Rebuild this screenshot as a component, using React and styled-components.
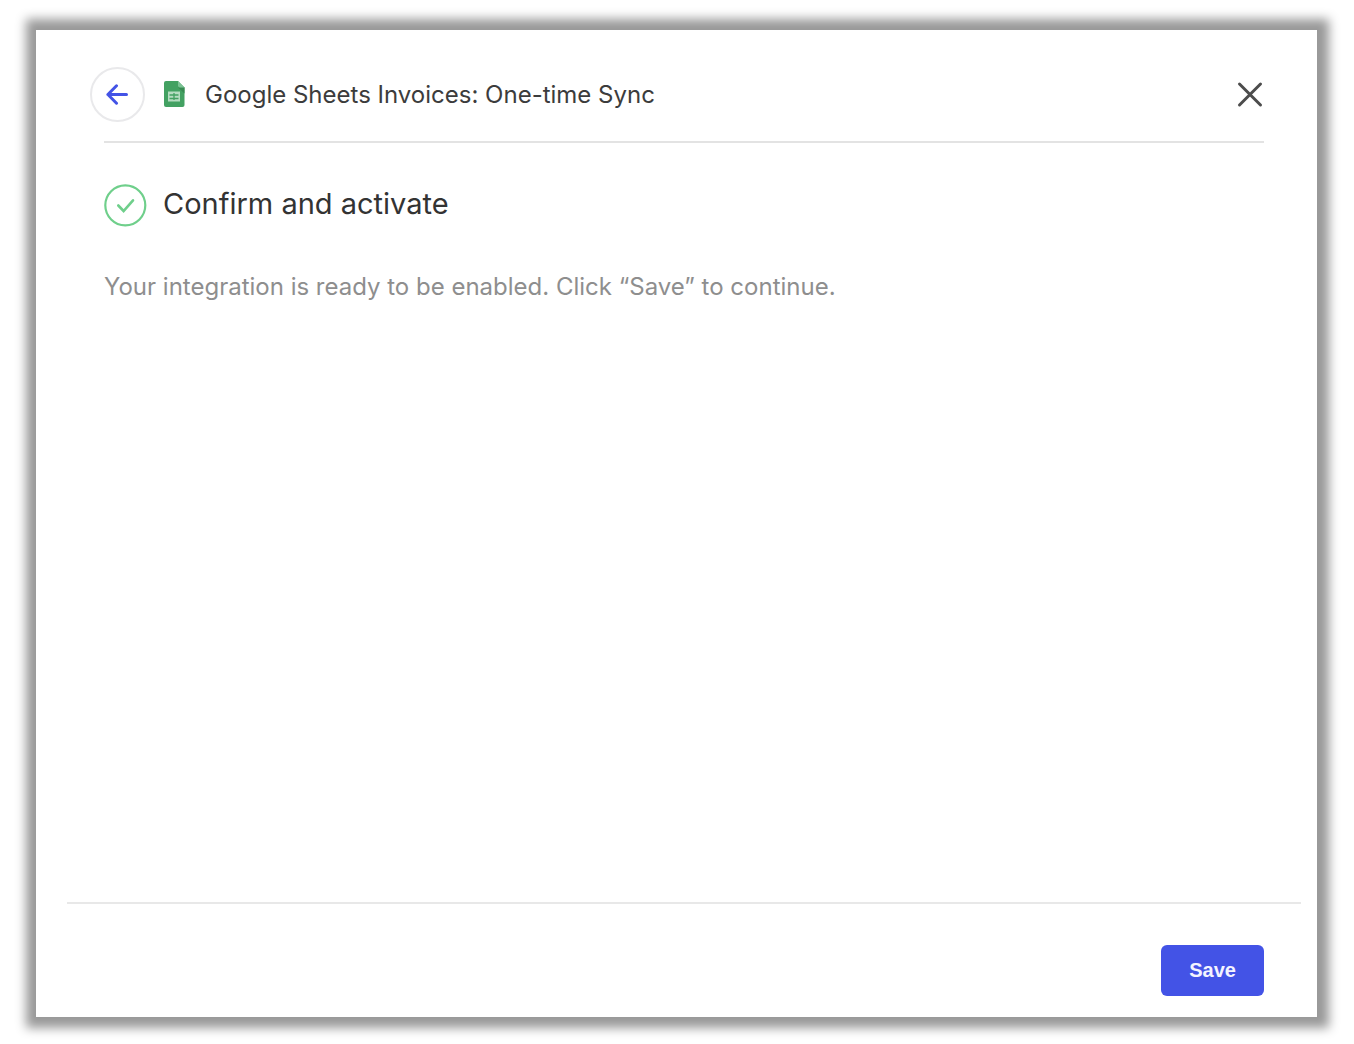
import styled, { createGlobalStyle } from "styled-components";

const GlobalStyle = createGlobalStyle`
    * {
        box-sizing: border-box;
    }

    body {
        margin: 0;
        background-color: #fff;
        font-family: Inter, "Liberation Sans", sans-serif;
    }
`;

const Page = styled.div`
    display: flex;
    min-height: 100vh;
    padding: 30px 37px 27px 36px;
`;

const Dialog = styled.main`
    display: flex;
    flex: 1;
    flex-direction: column;
    padding: 37px 16px 21px 31px;
    background-color: #fff;
    box-shadow: 1px 0 10px 11px #999;
`;

const Header = styled.header`
    display: flex;
    align-items: center;
    margin: 0 37px 0 23px;
`;

const IconButton = styled.button`
    display: flex;
    align-items: center;
    justify-content: center;
    padding: 0;
    border: none;
    background: none;
    cursor: pointer;
`;

const BackButton = styled(IconButton)`
    width: 55px;
    height: 55px;
    border: 2px solid #e9e9eb;
    border-radius: 50%;
`;

const SheetsIcon = styled.svg`
    width: 21px;
    height: 28px;
    margin: 0 20px 0 19px;
`;

const Title = styled.h1`
    flex: 1;
    margin: 0;
    color: #3c3c3c;
    font-size: 24px;
    font-weight: 400;
    line-height: 32px;
`;

const Content = styled.section`
    flex: 1;
    margin: 19px 37px 0;
    padding-top: 41px;
    border-top: 2px solid #e3e3e3;
`;

const Step = styled.div`
    display: flex;
    align-items: flex-start;
    gap: 16px;
`;

const StepTitle = styled.h2`
    margin: 0;
    color: #333;
    font-size: 29px;
    font-weight: 400;
    line-height: 40px;
`;

const Message = styled.p`
    margin: 44px 0 0;
    color: #8e8e8e;
    font-size: 24px;
    line-height: 32px;
`;

const Footer = styled.footer`
    display: flex;
    justify-content: flex-end;
    padding: 41px 37px 0;
    border-top: 2px solid #e8e8e8;
`;

const SaveButton = styled.button`
    height: 51px;
    padding: 0 28px;
    border: none;
    border-radius: 6px;
    background-color: #4353e6;
    color: #f4f4ff;
    font-family: "Liberation Sans", Arial, sans-serif;
    font-size: 20px;
    font-weight: 700;
    cursor: pointer;
`;

export default function App() {
    return (
        <>
            <GlobalStyle />
            <Page>
                <Dialog>
                    <Header>
                        <BackButton type="button" aria-label="Back">
                            <svg width="23" height="21" viewBox="0 0 23 21" fill="none" stroke="#4353e6" strokeWidth="3" strokeLinecap="round" strokeLinejoin="round">
                                <path d="M20.5 10.5H1.9M10.5 1.8L1.9 10.5L10.5 19.2" />
                            </svg>
                        </BackButton>
                        <SheetsIcon viewBox="0 0 21 28" aria-hidden="true">
                            <path d="M2 0H14L20.5 6.5V24Q20.5 26 18.5 26H2Q0 26 0 24V2Q0 0 2 0Z" fill="#43a162" />
                            <path d="M14 6.5H20.5V12.5Z" fill="#388a52" />
                            <path d="M14 0L20.5 6.5H16Q14 6.5 14 4.5Z" fill="#7cc294" />
                            <path d="M4 10.5H16V20.5H4Z" fill="#b5dcc1" />
                            <path d="M5.5 14H14.5M5.5 17.5H14.5M10 12V19" stroke="#43a162" strokeWidth="1.3" />
                        </SheetsIcon>
                        <Title>Google Sheets Invoices: One-time Sync</Title>
                        <IconButton type="button" aria-label="Close">
                            <svg width="28" height="28" viewBox="0 0 28 28" fill="none" stroke="#4c4c4c" strokeWidth="3" strokeLinecap="round">
                                <path d="M3.5 3L24.5 24M24.5 3L3.5 24" />
                            </svg>
                        </IconButton>
                    </Header>
                    <Content>
                        <Step>
                            <svg width="43" height="43" viewBox="0 0 43 43" fill="none" stroke="#6fcf8b" strokeWidth="2.2" aria-hidden="true">
                                <circle cx="21.3" cy="21.3" r="20" />
                                <path d="M14.3 21.5L19.6 27L29 16.3" strokeWidth="2.6" strokeLinecap="round" />
                            </svg>
                            <StepTitle>Confirm and activate</StepTitle>
                        </Step>
                        <Message>Your integration is ready to be enabled. Click “Save” to continue.</Message>
                    </Content>
                    <Footer>
                        <SaveButton type="button">Save</SaveButton>
                    </Footer>
                </Dialog>
            </Page>
        </>
    );
}
